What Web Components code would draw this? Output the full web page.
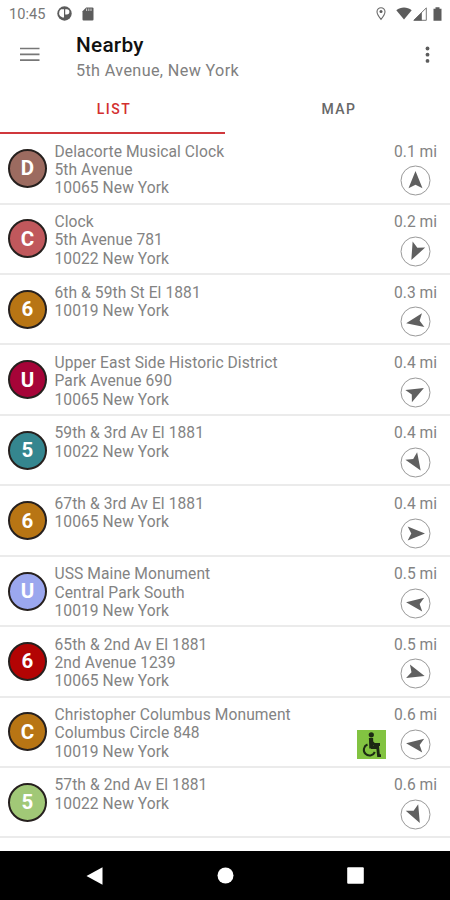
<!DOCTYPE html>
<html lang="en">
<head>
<meta charset="utf-8">
<title>Nearby</title>
<style>
html, body { margin: 0; height: 100%; overflow: hidden; background: #fff; }
body { font-family: Roboto, "Liberation Sans", sans-serif; }
</style>
</head>
<body>
<nearby-app>
  <status-bar></status-bar>
  <app-header heading="Nearby" subtitle="5th Avenue, New York"></app-header>
  <tab-bar><tab-item active>LIST</tab-item><tab-item>MAP</tab-item></tab-bar>
  <place-list></place-list>
  <nav-bar></nav-bar>
</nearby-app>
<script>
const define = (name, html, setup) => {
  customElements.define(name, class extends HTMLElement {
    constructor() {
      super();
      const t = document.createElement('template');
      t.innerHTML = html;
      this.attachShadow({ mode: 'open' }).appendChild(t.content.cloneNode(true));
    }
    connectedCallback() { if (setup) setup(this, this.shadowRoot); }
  });
};

define('nearby-app', `<style>
:host { display: flex; flex-direction: column; width: 450px; height: 900px; overflow: hidden; background: #fff; color: #757575; }
</style><slot></slot>`);

define('status-bar', `<style>
:host { display: flex; align-items: center; height: 27px; padding: 0 9px; box-sizing: border-box; flex: none; }
.time { font-size: 14.6px; letter-spacing: 0; color: #777; width: 48px; }
svg { display: block; fill: #5c5c5c; }
.space { flex: 1; }
</style>
<span class="time">10:45</span>
<svg width="15" height="15" viewBox="0 0 15 15"><circle cx="7.5" cy="7.5" r="7.2"/><path fill="#fff" d="M4 3.200H7V11.500H5.600A4.600 4.600 0 0 1 4 3.200zM8.200 3.200h1.600a2.200 2.200 0 0 1 0 5.200H8.200z"/></svg>
<svg style="margin-left:10px" width="12" height="14" viewBox="0 0 12 14"><path d="M4.200.5H10.400q1.100 0 1.100 1.100V12.400q0 1.100-1.100 1.100H1.600Q.5 13.500.5 12.400V4.200z"/><path stroke="#c8c8c8" stroke-width="1.100" d="M4.600 1.500v2.500M6.800 1.500v2.500M9 1.500v2.500"/></svg>
<span class="space"></span>
<svg width="10" height="14" viewBox="0 0 10 14"><path fill="none" stroke="#6a6a6a" stroke-width="1.100" d="M5 .7a4 4 0 0 1 4 4C9 7.500 5 12.300 5 12.300S1 7.500 1 4.700a4 4 0 0 1 4-4z"/><circle cx="5" cy="4.500" r="1.500"/></svg>
<svg style="margin-left:10px" width="16" height="13" viewBox="0 0 16 13"><path d="M.3 3.200C4.800-.5 11.200-.5 15.700 3.200L8 12.600z"/></svg>
<svg style="margin-left:1px" width="14" height="14" viewBox="0 0 14 14"><path d="M.8 13.300 13.300.9V13.300z" fill="#fff" stroke="#777" stroke-width="1"/><path d="M.5 13.500 8.800 5.200V13.500z"/></svg>
<svg style="margin:0 -1px 0 6px" width="9" height="14" viewBox="0 0 9 14"><path d="M.5 1.800h2V.3h4v1.500h2v12H.5z"/></svg>`);

define('app-header', `<style>
:host { display: flex; align-items: flex-start; height: 58px; padding: 5px 18px 0 20px; box-sizing: border-box; flex: none; }
svg { display: block; }
.menu { margin-top: 15px; }
.text { flex: 1; margin-left: 36px; }
h1 { margin: 0; font-size: 20.800px; line-height: 26px; font-weight: 500; letter-spacing: .25px; color: #111; }
p { margin: 1.500px 0 0; font-size: 16.200px; line-height: 22px; color: #808080; letter-spacing: .36px; }
.more { margin-top: 14px; }
</style>
<svg class="menu" width="20" height="15" viewBox="0 0 20 15"><path stroke="#777" stroke-width="1.700" d="M0 1.500h19.500M0 7.300h19.500M0 13.100h19.500"/></svg>
<div class="text"><h1></h1><p></p></div>
<svg class="more" width="9" height="18" viewBox="0 0 9 18" fill="#5c5c5c"><circle cx="4.500" cy="2.500" r="1.900"/><circle cx="4.500" cy="8.700" r="1.900"/><circle cx="4.500" cy="14.900" r="1.900"/></svg>`,
(el, r) => {
  r.querySelector('h1').textContent = el.getAttribute('heading');
  r.querySelector('p').textContent = el.getAttribute('subtitle');
});

define('tab-bar', `<style>:host { display: flex; height: 49px; flex: none; }</style><slot></slot>`);

define('tab-item', `<style>
:host { flex: 1; display: flex; align-items: center; justify-content: center; padding-left: 3px; box-sizing: border-box; border-bottom: 2px solid transparent; font-size: 14px; font-weight: 500; letter-spacing: 1.500px; color: #686868; }
:host([active]) { color: #d32f2f; border-color: #d0383c; }
</style><slot></slot>`);

define('letter-badge', `<style>
:host { display: flex; align-items: center; justify-content: center; width: 39px; height: 39px; box-sizing: border-box; border: 2px solid #26201e; border-radius: 50%; color: #fff; font-size: 20.500px; font-weight: 700; flex: none; }
</style><slot></slot>`);

define('heading-arrow', `<style>:host { display: block; } svg { display: block; }</style>
<svg width="31" height="31" viewBox="-15.500 -15.500 31 31"><circle r="14.500" fill="#fff" stroke="#999" stroke-width="1"/><path fill="#606060" d="M0-9.500 7 7.800 0 4.200-7 7.800z"/></svg>`,
(el, r) => r.querySelector('path').setAttribute('transform', 'rotate(' + el.getAttribute('angle') + ')'));

define('access-icon', `<style>:host { display: block; } svg { display: block; }</style>
<svg width="29" height="29" viewBox="0 0 29 29"><rect width="29" height="29" fill="#82c341"/><circle cx="14.300" cy="4.800" r="2.600" fill="#1c2a14"/><g fill="none" stroke="#1c2a14"><path stroke-width="4.200" d="M14 8 14.400 18.500"/><path stroke-width="2.800" d="M14 17.500h6.700l.8 8.200h2.500M14 11.500l3.500 3h5.500"/><path stroke-width="2" d="M10.500 14.500a5.700 5.700 0 1 0 7.300 7.500"/></g></svg>`);

define('place-row', `<style>
:host { display: flex; align-items: flex-start; height: 70.430px; box-sizing: border-box; border-bottom: 2px solid #ebebeb; padding: 0 13px 0 8px; flex: none; }
letter-badge { margin-top: 14.800px; }
.text { flex: 1; margin: 8.500px 0 0 7.500px; font-size: 15.600px; line-height: 18.300px; letter-spacing: .07px; color: #838383; white-space: nowrap; }
.side { display: flex; flex-direction: column; align-items: flex-end; margin-top: 8.500px; }
.dist { font-size: 15.600px; line-height: 18.300px; color: #838383; white-space: nowrap; }
.icons { display: flex; align-items: center; gap: 14px; margin: 4.500px 6px 0 0; }
</style>
<letter-badge></letter-badge><div class="text"></div>
<div class="side"><span class="dist"></span><div class="icons"><heading-arrow></heading-arrow></div></div>`,
(el, r) => {
  const p = el.place;
  const b = r.querySelector('letter-badge');
  b.textContent = p.lines[0][0];
  b.style.background = p.color;
  p.lines.forEach(l => {
    const d = document.createElement('div');
    d.textContent = l;
    r.querySelector('.text').appendChild(d);
  });
  r.querySelector('.dist').textContent = p.dist + ' mi';
  r.querySelector('heading-arrow').setAttribute('angle', p.angle);
  if (p.access) r.querySelector('.icons').prepend(document.createElement('access-icon'));
});

define('place-list', `<style>:host { display: flex; flex-direction: column; flex: 1; min-height: 0; overflow: hidden; padding-top: .2px; }</style>`,
(el, r) => {
  [
    ['#9c6b60', 0.1, 0, ['Delacorte Musical Clock', '5th Avenue', '10065 New York']],
    ['#c0585c', 0.2, 206, ['Clock', '5th Avenue 781', '10022 New York']],
    ['#b87514', 0.3, 260, ['6th & 59th St El 1881', '10019 New York']],
    ['#a60438', 0.4, 62, ['Upper East Side Historic District', 'Park Avenue 690', '10065 New York']],
    ['#35868f', 0.4, 147, ['59th & 3rd Av El 1881', '10022 New York']],
    ['#b87514', 0.4, 90, ['67th & 3rd Av El 1881', '10065 New York']],
    ['#9ba7ee', 0.5, 278, ['USS Maine Monument', 'Central Park South', '10019 New York']],
    ['#b30404', 0.5, 106, ['65th & 2nd Av El 1881', '2nd Avenue 1239', '10065 New York']],
    ['#b87514', 0.6, 278, ['Christopher Columbus Monument', 'Columbus Circle 848', '10019 New York'], true],
    ['#a1c877', 0.6, 153, ['57th & 2nd Av El 1881', '10022 New York']]
  ].forEach(([color, dist, angle, lines, access]) => {
    const row = document.createElement('place-row');
    row.place = { color, dist, angle, lines, access };
    r.appendChild(row);
  });
});

define('nav-bar', `<style>
:host { display: grid; grid-template-columns: 188px 74px 186px; justify-items: center; align-items: center; height: 49px; background: #000; flex: none; }
svg { display: block; fill: #fff; }
</style>
<svg width="17" height="18" viewBox="0 0 17 18"><path d="M.5 9 16.500.3V17.700z"/></svg>
<svg width="17" height="17" viewBox="0 0 17 17"><circle cx="8.500" cy="8.500" r="8"/></svg>
<svg width="17" height="17" viewBox="0 0 17 17"><rect x=".2" y=".2" width="16.600" height="16.600" rx="1"/></svg>`);
</script>
</body>
</html>
